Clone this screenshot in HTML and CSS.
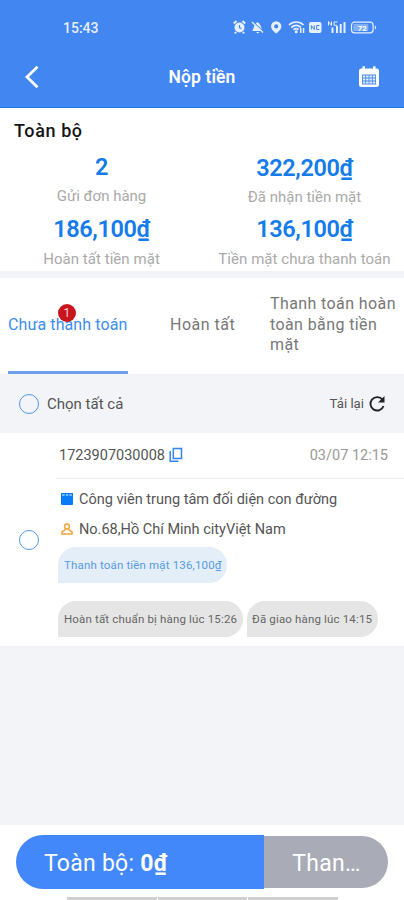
FILE: index.html
```html
<!DOCTYPE html>
<html lang="vi">
<head>
<meta charset="utf-8">
<title>Nộp tiền</title>
<link rel="stylesheet" href="styles.css">
</head>
<body>
<div class="screen">
  <header class="header">
    <div class="status">
      <span class="time">15:43</span>
      <svg width="146" height="16" viewBox="0 0 146 16" fill="#e6effd">
        <circle cx="7.500" cy="8.500" r="5"/><path d="M1.800 4.500 4.500 2M13.200 4.500 10.500 2M4 13l-1 1.500M11 13l1 1.500" stroke="#e6effd" stroke-width="2"/><path d="M7.500 6v2.800l2 .8" fill="none" stroke="#4287f1" stroke-width="1.100"/>
        <path d="M20 12c2-1.500 1.500-7 5.500-8.800 4 1.800 3.500 7.300 5.500 8.800zM24 13h3.500l-1.700 1.500z"/><path d="M20.500 2.500l11.500 10.500" stroke="#4287f1" stroke-width="1.200"/><path d="M20 3l11 10.500" stroke="#e6effd" stroke-width="1.200"/>
        <g transform="translate(2.500 0)">
        <path fill-rule="evenodd" d="M41.700 2.300a5.200 5.200 0 0 0-5.200 5.200c0 3.500 5.200 7 5.200 7s5.200-3.500 5.200-7a5.200 5.200 0 0 0-5.200-5.200zm0 3a2.100 2.100 0 1 1 0 4.200 2.100 2.100 0 0 1 0-4.200z"/>
        <g fill="none" stroke="#e6effd" stroke-width="1.700"><path d="M54.500 6c4-4 10.500-4 14.500 0M56.800 8.500c3-2.600 6.700-2.600 9.700 0M59 10.800c2-1.500 3.500-1.500 5 0"/></g><circle cx="61.700" cy="12.800" r="1.500"/><path d="M65.500 9H67v5h-1.500zM68.300 9h1.500v5h-1.500z"/>
        <rect x="74.500" y="3" width="12.500" height="11" rx="2"/><path d="M76.800 10.500v-4l3 4v-4M84.800 6.500h-2.600v4h2.600" fill="none" stroke="#4287f1" stroke-width="1"/>
        <path d="M97 8.500h2V14h-2zM101.500 7h2v7h-2zM105.200 5h2v9h-2zM109 3h2v11h-2z"/><path d="M94 6.500v-4l3 4v-4M103 3h-3.500v3.300h3" fill="none" stroke="#e6effd" stroke-width="1"/>
        <rect x="117" y="3.200" width="21.600" height="10.600" rx="3" fill="none" stroke="#e6effd" stroke-width="1.200"/><rect x="118.800" y="5" width="15" height="7" rx="1" opacity=".4"/><path d="M140.300 6.500c1.600.4 1.600 3.600 0 4z"/><text class="battery" x="127.800" y="11.500" text-anchor="middle">72</text>
        </g>
      </svg>
    </div>
    <div class="nav">
      <svg width="20" height="26" viewBox="0 0 20 26" fill="none" stroke="#fff" stroke-width="2.800"><path d="M15.500 2.800 5 13l10.500 10.200"/></svg>
      <h1 class="title">Nộp tiền</h1>
      <svg width="22" height="24" viewBox="0 0 22 24"><path d="M3.500 3.500h15a2.500 2.500 0 0 1 2.500 2.500v13.500a2.500 2.500 0 0 1-2.500 2.500h-15A2.500 2.500 0 0 1 1 19.500V6a2.500 2.500 0 0 1 2.500-2.500zM4.500 1.200h2.400v4H4.500zM15.100 1.200h2.400v4h-2.400z" fill="#fff"/><path d="M4 9.500h14v10H4z" fill="#4287f1"/><path d="M4.800 10.400h2.500v2.200H4.800zM8.100 10.400h2.500v2.200H8.100zM11.400 10.400h2.500v2.200h-2.500zM14.700 10.400h2.500v2.200h-2.500zM4.800 13.400h2.500v2.200H4.800zM8.100 13.400h2.500v2.200H8.100zM11.400 13.400h2.500v2.200h-2.500zM14.700 13.400h2.500v2.200h-2.500zM4.800 16.400h2.500v2.200H4.800zM8.100 16.400h2.500v2.200H8.100zM11.400 16.400h2.500v2.200h-2.500zM14.700 16.400h2.500v2.200h-2.500z" fill="#e4eefd"/></svg>
    </div>
  </header>

  <section class="summary">
    <h2 class="summary-title">Toàn bộ</h2>
    <div class="stats">
      <div class="stat"><div class="value">2</div><div class="label">Gửi đơn hàng</div></div>
      <div class="stat stat-received"><div class="value">322,200₫</div><div class="label">Đã nhận tiền mặt</div></div>
      <div class="stat"><div class="value">186,100₫</div><div class="label label-low">Hoàn tất tiền mặt</div></div>
      <div class="stat"><div class="value">136,100₫</div><div class="label label-low">Tiền mặt chưa thanh toán</div></div>
    </div>
  </section>

  <nav class="tabs">
    <div class="tab active">Chưa thanh toán<span class="badge">1</span></div>
    <div class="tab tab-done">Hoàn tất</div>
    <div class="tab tab-cash">Thanh toán hoàn toàn bằng tiền mặt</div>
  </nav>

  <div class="select-row">
    <span class="radio"></span>
    <span class="select-label">Chọn tất cả</span>
    <span class="reload">Tải lại</span>
    <svg width="18" height="18" viewBox="0 0 18 18"><path d="M14.500 4.800A6.700 6.700 0 1 0 15.500 11" fill="none" stroke="#222" stroke-width="1.900"/><path d="M16.500 1v6.500H10z" fill="#222"/></svg>
  </div>

  <article class="order">
    <div class="check"><span class="radio"></span></div>
    <div class="order-main">
      <div class="order-head">
        <span class="order-id">1723907030008</span>
        <svg width="14" height="16" viewBox="0 0 14 16" fill="none" stroke="#3285f0" stroke-width="1.500"><path d="M4.300 1.500h8.200v10H4.300zM1.200 4v10.300h8.300"/><path d="M10.500 1.500h2v2z" fill="#3285f0" stroke="none"/></svg>
        <span class="date">03/07 12:15</span>
      </div>
      <div class="line line-place">
        <svg width="12" height="12" viewBox="0 0 12 12"><path d="M0 0h12v11a1 1 0 0 1-1 1H1a1 1 0 0 1-1-1z" fill="#087cf5"/><path d="M1.200 1h2.400v2H1.200zM4.800 1h2.400v2H4.800zM8.400 1h2.400v2H8.400z" fill="#7dbbfb"/></svg>
        <span>Công viên trung tâm đối diện con đường</span>
      </div>
      <div class="line">
        <svg width="12" height="12" viewBox="0 0 12 12" fill="none" stroke="#f5a43a" stroke-width="1.500"><circle cx="6" cy="3.500" r="2.500"/><path d="M4.700 6.400 1 8.900v2.100h10V8.900L7.300 6.400"/></svg>
        <span>No.68,Hồ Chí Minh cityViệt Nam</span>
      </div>
      <div class="tags"><span class="tag tag-blue">Thanh toán tiền mặt 136,100₫</span></div>
      <div class="tags tags-time"><span class="tag tag-ready">Hoàn tất chuẩn bị hàng lúc 15:26</span><span class="tag tag-delivered">Đã giao hàng lúc 14:15</span></div>
    </div>
  </article>

  <footer class="footer">
    <div class="pay">
      <div class="total"><span>Toàn bộ:</span> <b>0₫</b></div>
      <div class="submit">Than…</div>
    </div>
    <div class="nav-hint"><i></i><i></i><i></i></div>
  </footer>
</div>
</body>
</html>
```

FILE: styles.css
```css
* { box-sizing: border-box; }
body { margin: 0; font-family: Roboto, "Liberation Sans", sans-serif; color: #555; background: #f3f4f8; }
svg { display: block; flex: none; }
h1, h2 { margin: 0; }
.screen { width: 404px; height: 900px; display: flex; flex-direction: column; overflow: hidden; white-space: nowrap; }

.header { height: 108px; flex: none; background: #4287f1; border-bottom: 1px solid #2179e3; color: #fff; }
.status { height: 46px; padding: 19px 26px 0 63px; display: flex; justify-content: space-between; }
.time { font-size: 14px; font-weight: 500; line-height: 18px; color: #e6effd; }
.battery { font-size: 8px; font-weight: 700; fill: #fff; }
.nav { height: 62px; padding: 0 24px 0 22px; display: flex; align-items: center; justify-content: space-between; }
.title { padding-left: 4px; font-size: 17.500px; font-weight: 600; line-height: 22px; letter-spacing: .1px; }

.summary { height: 163px; flex: none; padding-top: 11px; background: #fff; }
.summary-title { margin-left: 14px; font-size: 18px; line-height: 24px; font-weight: 500; letter-spacing: .6px; color: #151515; }
.stats { margin-top: 10px; display: grid; grid-template-columns: 203px 203px; grid-template-rows: 62px 61px; text-align: center; }
.stat-received { padding-top: 1px; }
.value { font-size: 23.500px; line-height: 28px; font-weight: 600; letter-spacing: -.4px; color: #147bea; }
.label { margin-top: 5px; font-size: 15px; line-height: 20px; color: #aaa; }
.label-low { margin-top: 6px; letter-spacing: .05px; }

.tabs { height: 96px; flex: none; margin-top: 7px; padding-left: 8px; display: flex; align-items: stretch; background: #fff; font-size: 16px; line-height: 20.500px; letter-spacing: .1px; color: #777; }
.tab { display: flex; align-items: center; padding-bottom: 2px; }
.active { position: relative; width: 120px; border-bottom: 3px solid #70a0eb; padding: 1px 0 0; color: #3b8df0; }
.badge { position: absolute; left: 50px; top: 26px; width: 18px; height: 18px; border-radius: 50%; background: #c9151e; color: #f5d5d5; font-size: 12px; line-height: 18px; text-align: center; }
.tab-done { margin-left: 42px; width: 100px; letter-spacing: .5px; }
.tab-cash { width: 130px; white-space: normal; letter-spacing: .4px; }

.select-row { height: 59px; flex: none; padding: 0 18px 0 19px; display: flex; align-items: center; }
.radio { width: 20px; height: 20px; flex: none; border: 1.500px solid #5497e6; border-radius: 50%; }
.select-label { margin-left: 8px; font-size: 15px; }
.reload { margin-left: auto; margin-right: 4px; font-size: 13.200px; }

.order { height: 213px; flex: none; display: flex; background: #fff; }
.check { width: 56px; padding: 0 0 0 19px; display: flex; align-items: center; }
.order-main { flex: 1; }
.order-head { height: 46px; padding: 0 16px 1px 3px; border-bottom: 1px solid #f0f0f0; display: flex; align-items: center; }
.order-id { margin-right: 4px; font-size: 14.500px; }
.date { margin-left: auto; font-size: 14.500px; color: #999; }
.line { height: 30px; padding-left: 5px; display: flex; align-items: center; gap: 6px; font-size: 14.500px; }
.line-place { margin-top: 5px; }
.tags { height: 36px; margin: 3px 0 0 2px; display: flex; gap: 4px; }
.tags-time { margin-top: 18px; }
.tag { height: 36px; padding-left: 6px; border-radius: 18px 18px 18px 0; font-size: 11.500px; line-height: 37px; letter-spacing: .16px; background: #e5e5e5; color: #666; }
.tag-blue { width: 169px; background: #e4eef8; color: #559be3; }
.tag-ready { width: 185px; }
.tag-delivered { width: 131px; padding-left: 5px; }

.footer { height: 75px; margin-top: auto; padding: 10px 16px 0; background: #fff; }
.pay { height: 54px; display: flex; align-items: center; color: #fff; font-size: 23px; letter-spacing: .25px; }
.total { width: 249px; height: 54px; line-height: 58px; padding-left: 28px; border-radius: 27px 0 0 27px; background: #4288fb; }
.submit { width: 124px; height: 52px; line-height: 56px; padding-left: 28px; border-radius: 0 26px 26px 0; background: #a9abb6; }
.nav-hint { height: 3px; margin: 8px 50px 0 51px; display: flex; gap: 1px; }
.nav-hint i { flex: 1; background: #cfcfcf; }
```
